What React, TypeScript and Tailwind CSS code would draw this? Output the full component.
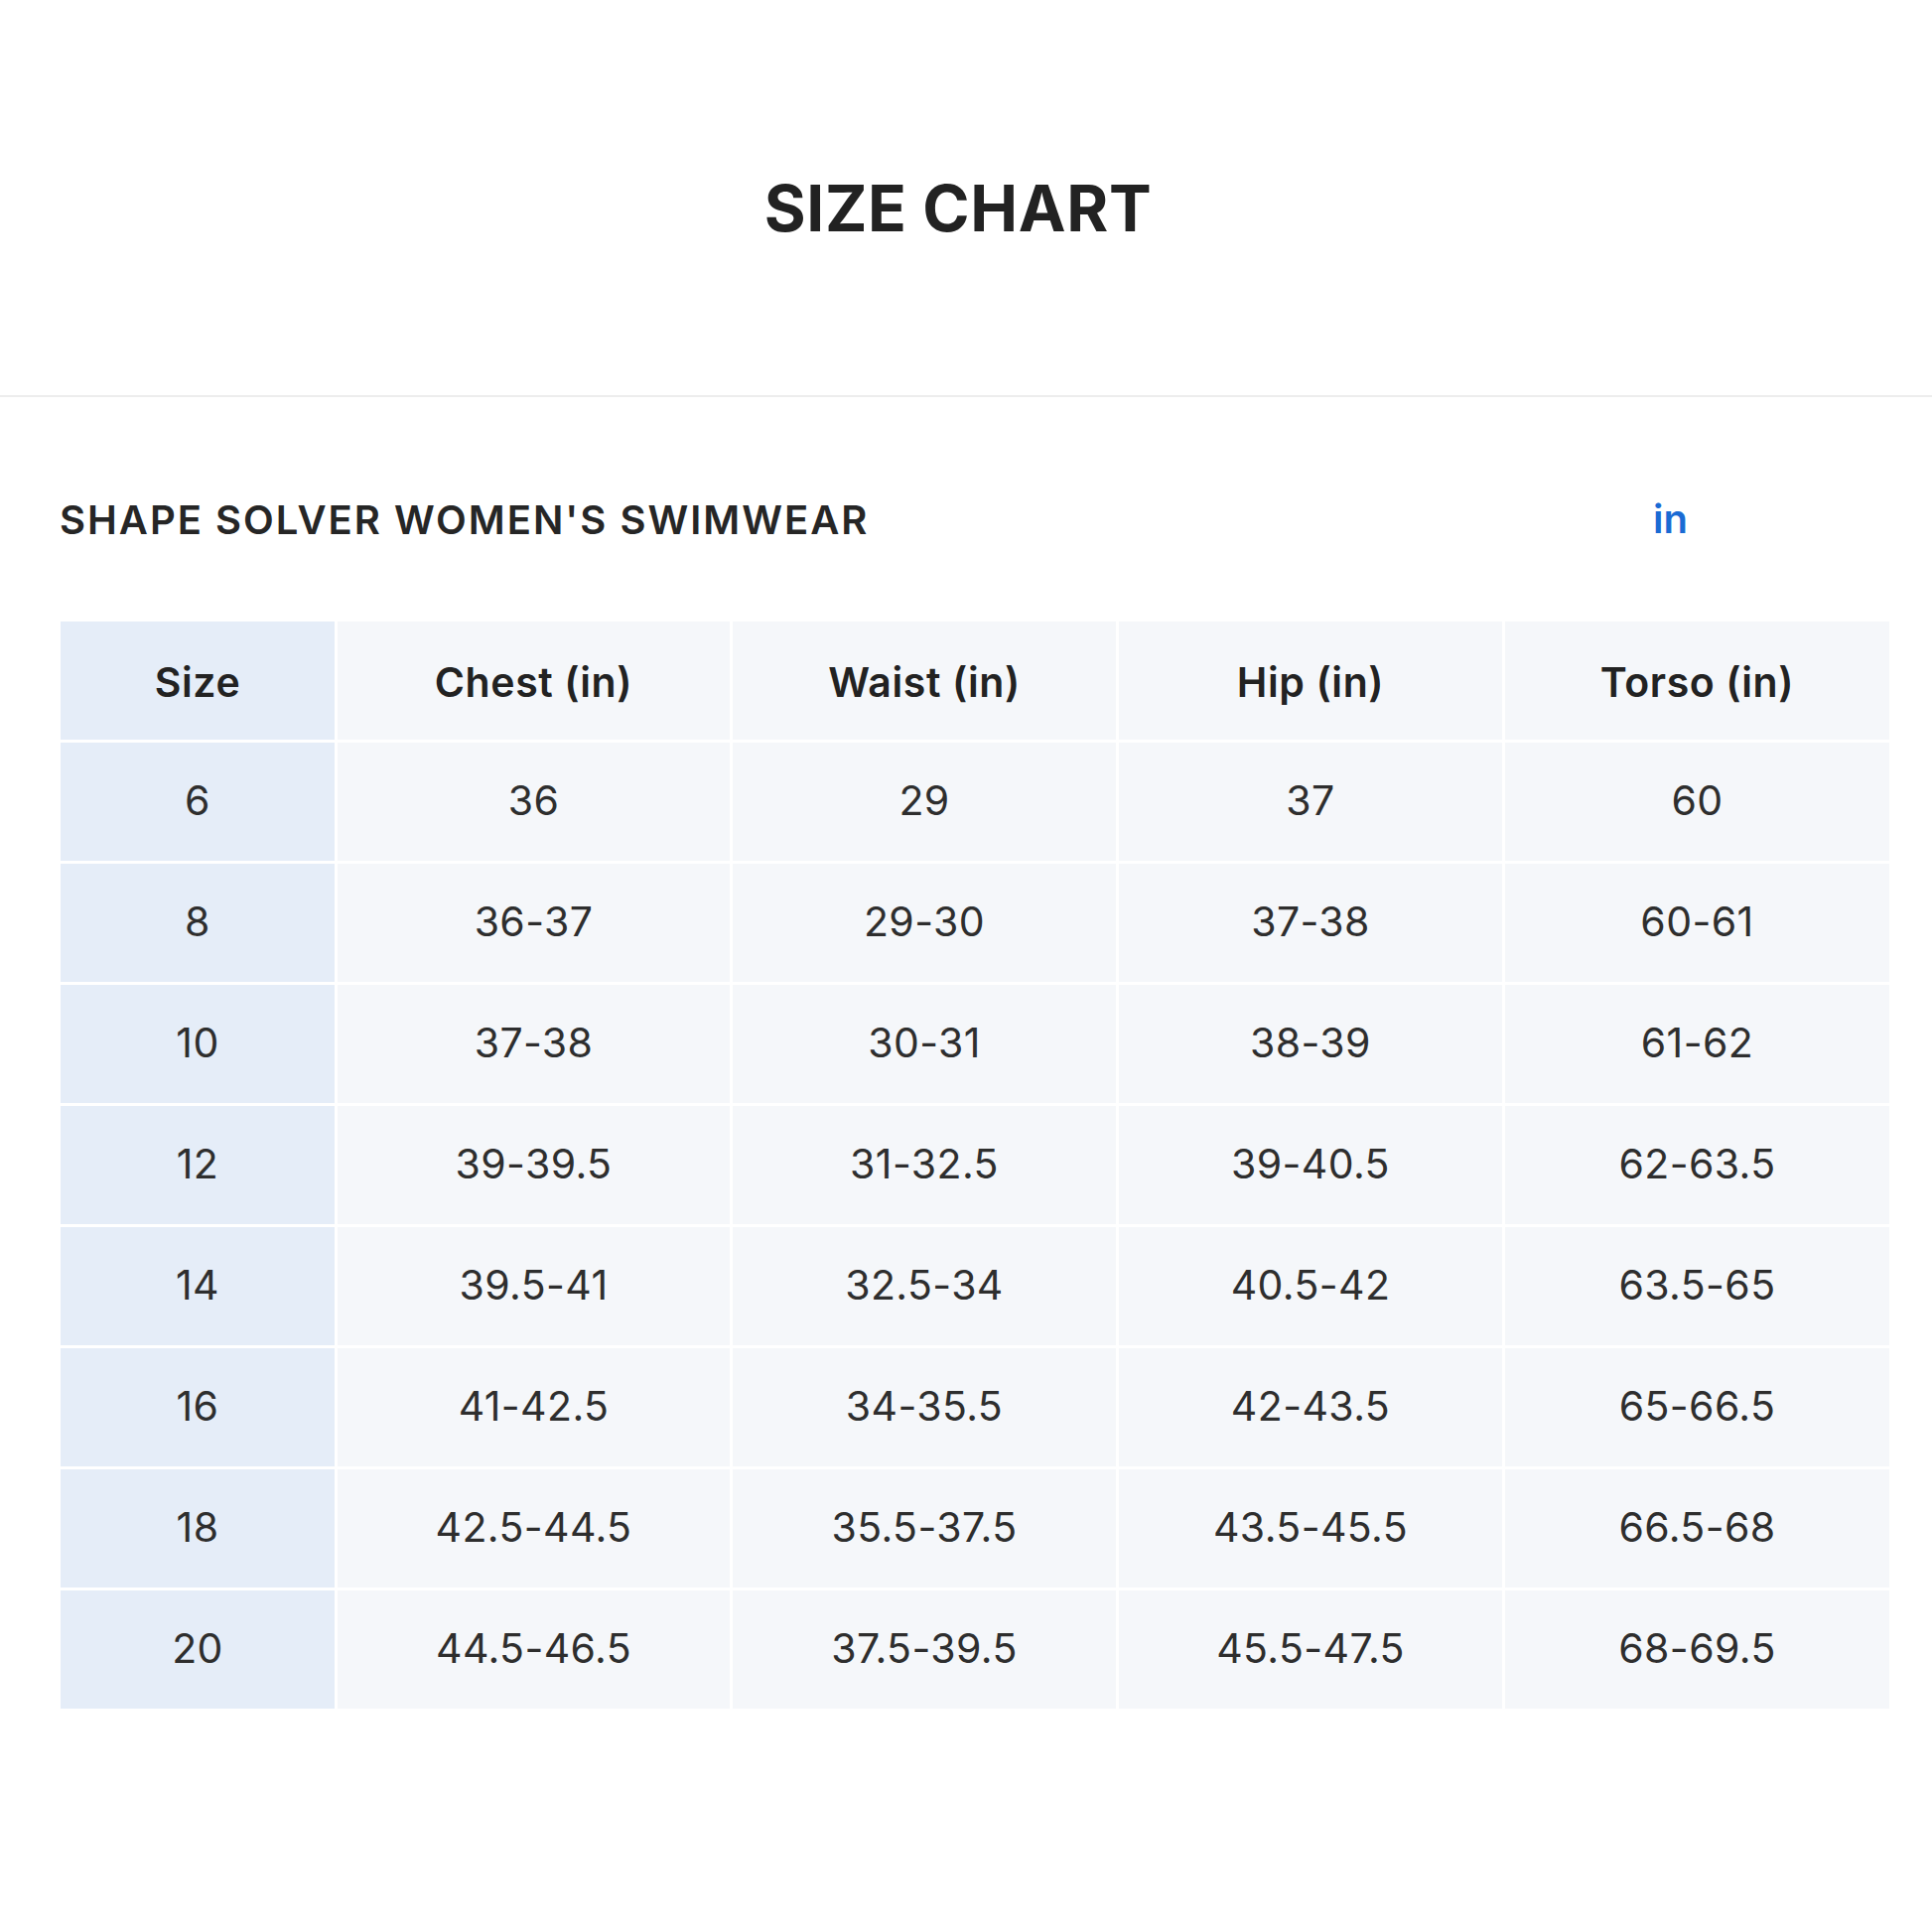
import React from "react";

const rows: string[][] = [
  ["6", "36", "29", "37", "60"],
  ["8", "36-37", "29-30", "37-38", "60-61"],
  ["10", "37-38", "30-31", "38-39", "61-62"],
  ["12", "39-39.5", "31-32.5", "39-40.5", "62-63.5"],
  ["14", "39.5-41", "32.5-34", "40.5-42", "63.5-65"],
  ["16", "41-42.5", "34-35.5", "42-43.5", "65-66.5"],
  ["18", "42.5-44.5", "35.5-37.5", "43.5-45.5", "66.5-68"],
  ["20", "44.5-46.5", "37.5-39.5", "45.5-47.5", "68-69.5"],
];

const headers = ["Size", "Chest (in)", "Waist (in)", "Hip (in)", "Torso (in)"];

export default function App() {
  return (
    <div
      className="w-[1946px] h-[1946px] bg-white text-[#262626]"
      style={{ fontFamily: "Inter, 'Noto Sans', sans-serif" }}
    >
      <div className="pt-[178px] pb-[156px] flex justify-center border-b-2 border-[#ededed]">
        <h1 className="text-[64px] leading-none font-bold text-[#222222] tracking-[0.01em] -ml-[16px]">
          SIZE CHART
        </h1>
      </div>

      <div className="pl-[60px] pr-[43px]">
        <div className="mt-[104px] flex items-start">
          <h2 className="text-[40px] leading-none font-semibold tracking-[0.05em] text-[#262626]">
            SHAPE SOLVER WOMEN'S SWIMWEAR
          </h2>
          <span className="ml-auto mr-[203px] text-[40px] leading-none font-semibold text-[#1a6bd4] -mt-[1px]">
            in
          </span>
        </div>

        <div className="mt-[82px] ml-px grid grid-cols-[276px_395px_386px_386px_1fr] gap-[3px] bg-white">
          {headers.map((h, i) => (
            <div
              key={h}
              className={`h-[119px] pt-[3px] flex items-center justify-center text-[41px] leading-none font-semibold tracking-[0.015em] text-[#222222] ${
                i === 0 ? "bg-[#e5edf8]" : "bg-[#f5f7fa]"
              }`}
            >
              {h}
            </div>
          ))}
          {rows.map((r) =>
            r.map((c, i) => (
              <div
                key={r[0] + "-" + i}
                className={`h-[119px] pb-[3px] flex items-center justify-center text-[41px] leading-none font-normal tracking-[0.01em] text-[#2e2e2e] ${
                  i === 0 ? "bg-[#e5edf8]" : "bg-[#f5f7fa]"
                }`}
              >
                {c}
              </div>
            ))
          )}
        </div>
      </div>
    </div>
  );
}
